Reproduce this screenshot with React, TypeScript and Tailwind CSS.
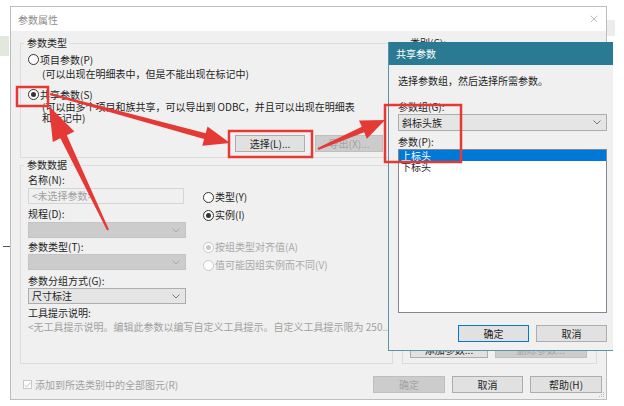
import { X } from "lucide-react";

// 参数属性 dialog with the 共享参数 picker open on top + red annotations

function Radio({ checked, disabled }: { checked?: boolean; disabled?: boolean }) {
  return (
    <span
      className={`flex h-[11px] w-[11px] shrink-0 items-center justify-center rounded-full border bg-white ${
        disabled ? "border-[#c8c8c8]" : "border-[#333333]"
      }`}
    >
      {checked && (
        <span className={`h-[5px] w-[5px] rounded-full ${disabled ? "bg-[#c8c8c8]" : "bg-[#333333]"}`} />
      )}
    </span>
  );
}

function Chevron({ color = "#7a7a7a" }: { color?: string }) {
  return (
    <svg width="8" height="5" viewBox="0 0 8 5" className="shrink-0">
      <path d="M0.5 0.5 L4 4 L7.5 0.5" fill="none" stroke={color} strokeWidth="1" />
    </svg>
  );
}

function Combo({ value, disabled, className = "" }: { value?: string; disabled?: boolean; className?: string }) {
  return (
    <div
      className={`flex items-center justify-between border pl-[3px] pr-[5px] leading-[12px] ${
        disabled ? "border-[#c4c4c4] bg-[#cccccc]" : "border-[#adadad] bg-[#e5e5e5] text-[#1e1e1e]"
      } ${className}`}
    >
      <span>{value}</span>
      <Chevron color={disabled ? "#a8a8a8" : "#7a7a7a"} />
    </div>
  );
}

function Btn({
  children,
  className = "",
  disabled,
  primary,
}: {
  children: React.ReactNode;
  className?: string;
  disabled?: boolean;
  primary?: boolean;
}) {
  return (
    <div
      className={`flex h-[17px] items-center justify-center border leading-[12px] ${
        disabled
          ? "border-[#bfbfbf] bg-[#cccccc] text-[#a3a3a3]"
          : primary
          ? "border-[#0078d7] bg-[#e1e1e1] text-[#1e1e1e]"
          : "border-[#adadad] bg-[#e1e1e1] text-[#1e1e1e]"
      } ${className}`}
    >
      {children}
    </div>
  );
}

function RadioRow({
  label,
  checked,
  disabled,
  className = "",
}: {
  label: string;
  checked?: boolean;
  disabled?: boolean;
  className?: string;
}) {
  return (
    <div className={`flex h-[12px] items-center gap-[1px] whitespace-nowrap ${className}`}>
      <Radio checked={checked} disabled={disabled} />
      <span className={disabled ? "text-[#a8a8a8]" : "text-[#1e1e1e]"}>{label}</span>
    </div>
  );
}

function arrow(x1: number, y1: number, x2: number, y2: number, w0: number, w1: number, hl: number, hw: number) {
  const L = Math.hypot(x2 - x1, y2 - y1);
  const ux = (x2 - x1) / L;
  const uy = (y2 - y1) / L;
  const nx = -uy;
  const ny = ux;
  const bx = x2 - ux * hl;
  const by = y2 - uy * hl;
  const p = [
    [x1 + (nx * w0) / 2, y1 + (ny * w0) / 2],
    [bx + (nx * w1) / 2, by + (ny * w1) / 2],
    [bx + (nx * hw) / 2, by + (ny * hw) / 2],
    [x2, y2],
    [bx - (nx * hw) / 2, by - (ny * hw) / 2],
    [bx - (nx * w1) / 2, by - (ny * w1) / 2],
    [x1 - (nx * w0) / 2, y1 - (ny * w0) / 2],
  ];
  return p.map((q) => `${q[0].toFixed(1)},${q[1].toFixed(1)}`).join(" ");
}

function Annotations() {
  const red = "#e53935";
  return (
    <svg className="pointer-events-none absolute left-0 top-0" width="624" height="406" viewBox="0 0 624 406">
      <rect x="17" y="87" width="31" height="19" fill="none" stroke={red} strokeWidth="2.5" />
      <rect x="229" y="131" width="83" height="26" fill="none" stroke={red} strokeWidth="2.5" />
      <rect x="385" y="105" width="76" height="57" fill="none" stroke={red} strokeWidth="2.5" />
      <polygon points={arrow(50, 94, 230, 143, 2, 6, 26, 20)} fill={red} />
      <polygon points={arrow(108, 230, 49, 106, 2, 7, 34, 24)} fill={red} />
      <polygon points={arrow(318, 149, 385, 120, 2, 6, 24, 20)} fill={red} />
    </svg>
  );
}

function SharedParams() {
  return (
    <div className="absolute left-[388px] top-[42px] flex h-[309px] w-[225px] flex-col border-b border-l border-[#5b93a8] bg-[#f0f0f0]">
      <div className="flex h-[23px] shrink-0 items-center bg-[#2b7a93] pl-[7px] text-white">共享参数</div>
      <div className="flex flex-col pl-[9px] pr-[6px] leading-[12px] text-[#1e1e1e]">
        <div className="mt-[10px] whitespace-nowrap">选择参数组，然后选择所需参数。</div>
        <div className="mt-[14px]">参数组(G):</div>
        <Combo value="斜标头族" className="mt-[1px] h-[17px]" />
        <div className="mt-[5px]">参数(P):</div>
        <div className="mt-[1px] h-[164px] border border-[#828790] bg-white">
          <div className="h-[11px] bg-[#0078d7] pl-[2px] leading-[11px] text-white">上标头</div>
          <div className="h-[11px] pl-[2px] leading-[11px]">下标头</div>
        </div>
        <div className="mt-[12px] flex justify-end gap-[7px]">
          <Btn primary className="w-[71px]">
            确定
          </Btn>
          <Btn className="w-[71px]">取消</Btn>
        </div>
      </div>
    </div>
  );
}

export default function App() {
  return (
    <div className="relative h-[406px] w-[624px] overflow-hidden bg-white font-['Noto_Sans_CJK_SC','Noto_Sans',sans-serif] text-[10px] text-[#1e1e1e]">
      {/* bits of the desktop behind */}
      <div className="absolute left-0 top-[36px] h-[20px] w-[9px] bg-[#e2e9dc]" />
      <div className="absolute left-[3px] top-[246px] h-px w-[7px] bg-[#555]" />
      <div className="absolute left-[607px] top-[20px] h-[16px] w-[8px] bg-[#ececec]" />

      <div className="pl-[10px] pt-[6px]">
        <div className="relative flex h-[394px] w-[597px] flex-col border border-[#bdbdbd] bg-[#f0f0f0]">
          {/* title */}
          <div className="flex h-[24px] shrink-0 items-center justify-between bg-white pl-[7px] pr-[6px]">
            <span className="text-[#8c8c8c]">参数属性</span>
            <X size={12} strokeWidth={1} color="#7a7a7a" />
          </div>

          <div className="flex flex-col pl-[9px] pr-[4px] pt-[3px]">
            <div className="flex h-[330px] gap-[9px]">
              {/* left column */}
              <div className="flex w-[373px] flex-col">
                <fieldset className="mt-[3px] h-[121px] border border-[#dcdcdc]">
                  <legend className="ml-[3px] px-[3px] leading-[12px]">参数类型</legend>
                  <div className="pl-[7px] pr-[9px]">
                    <RadioRow label="项目参数(P)" className="mt-[4px]" />
                    <div className="mt-[3px] whitespace-nowrap pl-[14px] leading-[12px]">
                      (可以出现在明细表中，但是不能出现在标记中)
                    </div>
                    <RadioRow label="共享参数(S)" checked className="mt-[8px]" />
                    <div className="mt-[2px] whitespace-nowrap pl-[14px] leading-[10.5px]">
                      (可以由多个项目和族共享，可以导出到 ODBC，并且可以出现在明细表
                      <br />
                      和标记中)
                    </div>
                    <div className="mt-[12px] flex justify-end gap-[10px]">
                      <Btn className="w-[70px]">选择(L)...</Btn>
                      <Btn disabled className="w-[68px]">
                        导出(X)...
                      </Btn>
                    </div>
                  </div>
                </fieldset>

                <fieldset className="mt-[1px] h-[205px] border border-[#dcdcdc]">
                  <legend className="ml-[3px] px-[3px] leading-[12px]">参数数据</legend>
                  <div className="flex pl-[7px] leading-[12px]">
                    <div className="flex w-[158px] flex-col">
                      <div className="mt-[3px]">名称(N):</div>
                      <div className="mt-[2px] flex h-[16px] w-[156px] items-center border border-[#d5d5d5] bg-[#f0f0f0] pl-[3px] text-[#a0a0a0]">
                        &lt;未选择参数&gt;
                      </div>
                      <div className="mt-[4px]">规程(D):</div>
                      <Combo disabled className="mt-[2px] h-[16px]" />
                      <div className="mt-[3px]">参数类型(T):</div>
                      <Combo disabled className="mt-[1px] h-[16px]" />
                      <div className="mt-[5px]">参数分组方式(G):</div>
                      <Combo value="尺寸标注" className="mt-[1px] h-[16px]" />
                    </div>
                    <div className="ml-[17px] flex flex-col">
                      <RadioRow label="类型(Y)" className="mt-[20px]" />
                      <RadioRow label="实例(I)" checked className="mt-[6px]" />
                      <RadioRow label="按组类型对齐值(A)" checked disabled className="mt-[20px]" />
                      <RadioRow label="值可能因组实例而不同(V)" disabled className="mt-[6px]" />
                    </div>
                  </div>
                  <div className="pl-[7px] leading-[12px]">
                    <div className="mt-[3px]">工具提示说明:</div>
                    <div className="mt-[2px] whitespace-nowrap text-[#a0a0a0]">
                      &lt;无工具提示说明。编辑此参数以编写自定义工具提示。自定义工具提示限为 250...
                    </div>
                  </div>
                </fieldset>
              </div>

              {/* right column */}
              <div className="flex w-[195px] flex-col leading-[12px]">
                <div className="mt-[3px] pl-[8px]">类别(C):</div>
                <div className="mt-[11px] flex flex-1 items-end gap-[7px] border border-[#dcdcdc] pb-[5px] pl-[7px]">
                  <Btn className="h-[16px] w-[78px]">添加参数...</Btn>
                  <Btn disabled className="h-[16px] w-[92px]">
                    删除参数...
                  </Btn>
                </div>
              </div>
            </div>

            {/* bottom row */}
            <div className="mt-[12px] flex h-[17px] items-center justify-between">
              <div className="ml-[3px] flex items-center gap-[3px] text-[#a0a0a0]">
                <span className="flex h-[9px] w-[9px] items-center justify-center border border-[#c8c8c8] bg-white">
                  <svg width="7" height="6" viewBox="0 0 7 6">
                    <path d="M0.5 3 L2.6 5 L6.5 0.5" fill="none" stroke="#c0c0c0" strokeWidth="1" />
                  </svg>
                </span>
                <span>添加到所选类别中的全部图元(R)</span>
              </div>
              <div className="flex gap-[7px]">
                <Btn disabled className="w-[72px]">
                  确定
                </Btn>
                <Btn className="w-[71px]">取消</Btn>
                <Btn className="w-[72px]">帮助(H)</Btn>
              </div>
            </div>
          </div>

          <svg className="absolute bottom-[1px] right-[1px]" width="7" height="7" viewBox="0 0 7 7">
            <rect x="5" y="1" width="1" height="1" fill="#b5b5b5" />
            <rect x="3" y="3" width="1" height="1" fill="#b5b5b5" />
            <rect x="5" y="3" width="1" height="1" fill="#b5b5b5" />
            <rect x="1" y="5" width="1" height="1" fill="#b5b5b5" />
            <rect x="3" y="5" width="1" height="1" fill="#b5b5b5" />
            <rect x="5" y="5" width="1" height="1" fill="#b5b5b5" />
          </svg>
        </div>
      </div>

      <SharedParams />
      <Annotations />
    </div>
  );
}
